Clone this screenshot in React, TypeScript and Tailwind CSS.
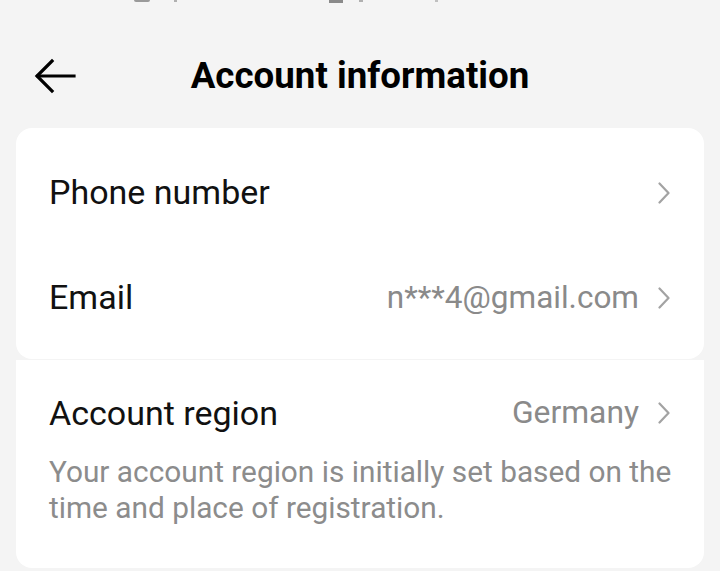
const font = { fontFamily: 'Roboto, "Noto Sans", sans-serif' };

function Chevron() {
  return (
    <svg width="14" height="22" viewBox="0 0 14 22" fill="none" stroke="#a3a3a3" strokeWidth="2.2" strokeLinecap="round" strokeLinejoin="round">
      <path d="M2.5 1.5 L11.5 11 L2.5 20.5" />
    </svg>
  );
}

function Row({ label, value }: { label: string; value?: string }) {
  return (
    <div className="flex h-[105px] items-center justify-between pl-[33px] pr-[33px]">
      <span className="text-[34px] text-[#111111]">{label}</span>
      <div className="flex items-center gap-[18px]">
        {value && <span className="text-[31.5px] text-[#8a8a8a]">{value}</span>}
        <Chevron />
      </div>
    </div>
  );
}

export default function App() {
  return (
    <div className="flex h-[571px] w-[720px] flex-col overflow-hidden bg-[#f4f4f4]" style={font}>
      {/* status bar, mostly cut off */}
      <div className="flex h-[4px] items-start">
        <span className="ml-[134px] h-[2px] w-[16px] rounded-b bg-[#9a9a9a]" />
        <span className="ml-[24px] h-[2px] w-[3px] bg-[#b0b0b0]" />
        <span className="ml-[152px] h-[3px] w-[14px] bg-[#8a8a8a]" />
        <span className="ml-[16px] h-[2px] w-[4px] bg-[#b0b0b0]" />
        <span className="ml-[72px] h-[2px] w-[3px] bg-[#c0c0c0]" />
      </div>

      <div className="relative flex h-[124px] items-center justify-center">
        <button className="absolute left-[34px] top-[54px] text-black">
          <svg width="44" height="36" viewBox="0 0 44 36" fill="none" stroke="currentColor" strokeWidth="3.2" strokeLinecap="square">
            <path d="M4 18 H40" />
            <path d="M18 3 L3 18 L18 33" />
          </svg>
        </button>
        <h1 className="pt-[20px] text-[36.7px] font-bold text-black">Account information</h1>
      </div>

      <div className="mx-[16px] rounded-[16px] bg-white pt-[12px] pb-[9px]">
        <Row label="Phone number" />
        <Row label="Email" value="n***4@gmail.com" />
      </div>

      <div className="mx-[16px] mt-[1px] mb-[3px] flex-1 rounded-b-[16px] bg-white pl-[33px] pr-[33px]">
        <div className="flex h-[106px] items-center justify-between">
          <span className="text-[34px] text-[#111111]">Account region</span>
          <div className="flex items-center gap-[18px]">
            <span className="text-[31.8px] text-[#8a8a8a]">Germany</span>
            <Chevron />
          </div>
        </div>
        <p className="-mr-[20px] -mt-[12px] text-[29.8px] leading-[36px] text-[#8c8c8c]">
          Your account region is initially set based on the time and place of registration.
        </p>
      </div>
    </div>
  );
}
